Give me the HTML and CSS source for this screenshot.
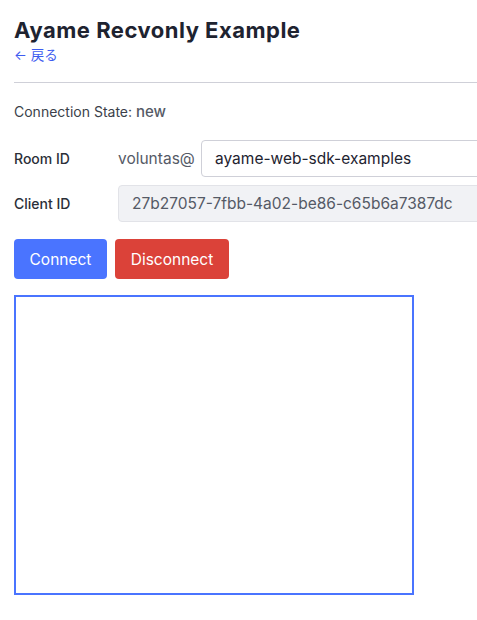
FILE: index.html
```html
<!DOCTYPE html>
<html lang="ja">
<head>
<meta charset="utf-8">
<title>Ayame Recvonly Example</title>
<link rel="stylesheet" href="styles.css">
</head>
<body>
<div class="page">
  <h1 class="title">Ayame Recvonly Example</h1>
  <a class="back" href="#">← 戻る</a>
  <hr class="rule">
  <p class="state">Connection State: <span class="state-value">new</span></p>
  <div class="row row-first">
    <label class="label">Room ID</label>
    <span class="prefix">voluntas@</span>
    <input class="input" type="text" value="ayame-web-sdk-examples">
  </div>
  <div class="row">
    <label class="label">Client ID</label>
    <input class="input input-readonly" type="text" value="27b27057-7fbb-4a02-be86-c65b6a7387dc" readonly>
  </div>
  <div class="actions">
    <button class="btn btn-connect">Connect</button>
    <button class="btn btn-disconnect">Disconnect</button>
  </div>
  <div class="video"></div>
</div>
</body>
</html>
```
FILE: styles.css
```css
html, body {
  margin: 0;
  padding: 0;
  background: #ffffff;
  overflow: hidden;
}
body {
  font-family: Inter, "Noto Sans CJK JP", sans-serif;
  color: #2b2f38;
}
.page {
  padding: 16px 0 0 14px;
  width: 463px;
  overflow: hidden;
}
.title {
  margin: 0;
  font-size: 22px;
  font-weight: 700;
  line-height: 28px;
  color: #1e2330;
  letter-spacing: 0.5px;
}
.back {
  display: block;
  margin-top: 3px;
  font-size: 13.5px;
  line-height: 16px;
  color: #3d5cf0;
  text-decoration: none;
}
.rule {
  margin: 19px 0 0 0;
  border: 0;
  border-top: 1px solid #cfd0d8;
  height: 0;
}
.state {
  margin: 19px 0 0 0;
  font-size: 14px;
  line-height: 20px;
  color: #3b3f4a;
}
.state-value {
  font-size: 15px;
  font-weight: 500;
  color: #555a66;
}
.row {
  display: flex;
  align-items: center;
  margin-top: 8px;
}
.row-first {
  margin-top: 18px;
}
.label {
  flex: none;
  width: 104px;
  font-size: 14px;
  font-weight: 500;
  color: #2b2f38;
}
.prefix {
  flex: none;
  width: 83px;
  font-size: 15.5px;
  color: #555a66;
}
.input {
  flex: none;
  box-sizing: border-box;
  height: 37px;
  width: 300px;
  padding: 0 13px;
  border: 1px solid #cfd0d8;
  border-radius: 4px;
  font-family: Inter, sans-serif;
  font-size: 15.5px;
  color: #1e2330;
  background: #ffffff;
  outline: none;
}
.input-readonly {
  width: 380px;
  background: #f1f2f5;
  border-color: #e2e3e8;
  color: #555a66;
}
.actions {
  display: flex;
  gap: 8px;
  margin-top: 17px;
}
.btn {
  height: 40px;
  padding: 0;
  border: 0;
  border-radius: 4px;
  font-family: Inter, sans-serif;
  font-size: 15.5px;
  color: #ffffff;
}
.btn-connect {
  width: 93px;
  background: #4a74ff;
}
.btn-disconnect {
  width: 114px;
  background: #db4239;
}
.video {
  box-sizing: border-box;
  margin-top: 16px;
  width: 400px;
  height: 300px;
  border: 2px solid #4a74ff;
}
```
